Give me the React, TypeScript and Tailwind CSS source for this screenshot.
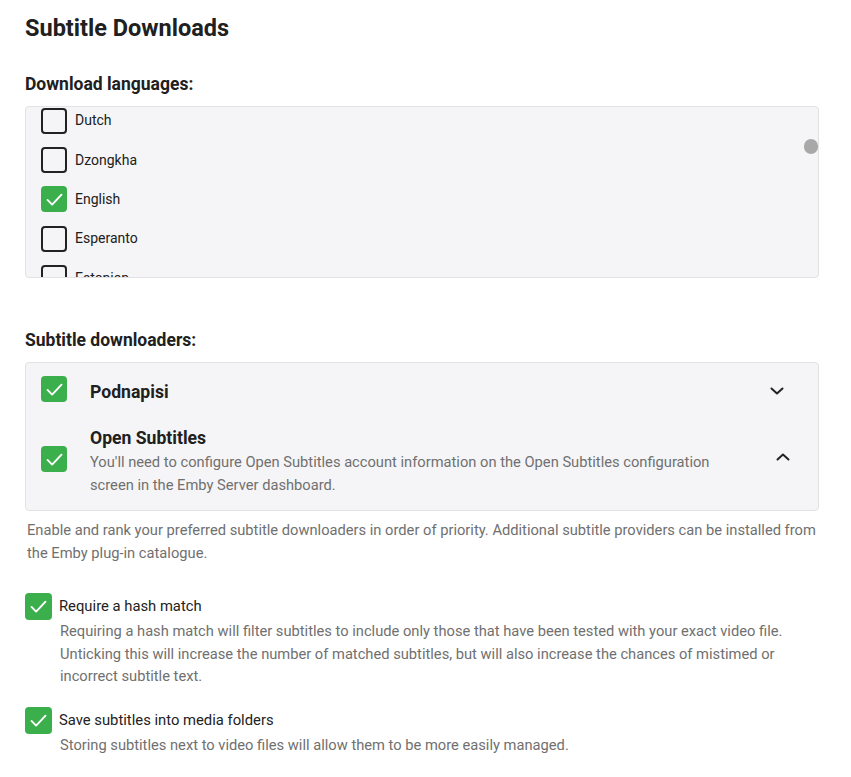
import { ReactNode } from "react";

const languages = [
  { name: "Dutch", checked: false },
  { name: "Dzongkha", checked: false },
  { name: "English", checked: true },
  { name: "Esperanto", checked: false },
  { name: "Estonian", checked: false },
];

function CheckBox({ checked, size = "w-[26px] h-[26px]" }: { checked: boolean; size?: string }) {
  if (checked) {
    return (
      <span className={`${size} shrink-0 rounded-[4px] bg-[#3aaf4c] flex items-center justify-center`}>
        <svg width="21" height="21" viewBox="0 0 24 24" fill="none" stroke="white" strokeWidth="2.2" strokeLinecap="round" strokeLinejoin="round">
          <polyline points="4,12.5 9.3,17.8 20,6.5" />
        </svg>
      </span>
    );
  }
  return <span className={`${size} shrink-0 rounded-[4px] border-2 border-[#222]`} />;
}

function Chevron({ up }: { up?: boolean }) {
  return (
    <svg width="14" height="8" viewBox="0 0 14 8" fill="none" stroke="#222" strokeWidth="2" strokeLinecap="round" strokeLinejoin="round">
      {up ? <polyline points="1.5,6.5 7,1.5 12.5,6.5" /> : <polyline points="1.5,1.5 7,6.5 12.5,1.5" />}
    </svg>
  );
}

function Option({ label, children, mt }: { label: string; children: ReactNode; mt: string }) {
  return (
    <div className={`flex gap-[7px] ${mt}`}>
      <CheckBox checked size="w-[27px] h-[27px]" />
      <div className="pt-[3px]">
        <div className="text-[14.8px] leading-[20px] text-[#222]">{label}</div>
        <div className="text-[14.7px] leading-[22.5px] text-[#707070] mt-[4px] pl-[1px]">{children}</div>
      </div>
    </div>
  );
}

export default function App() {
  return (
    <div className="w-[851px] h-[777px] bg-white pl-[25px] pr-[32px] pt-[13px] font-['Roboto',sans-serif] text-[#202020] overflow-hidden">
      <h1 className="text-[23.5px] font-bold leading-[30px]">Subtitle Downloads</h1>

      <h2 className="text-[17.5px] font-bold leading-[24px] mt-[29px]">Download languages:</h2>
      <div className="relative mt-[10px] h-[172px] rounded-[4px] border border-[#e2e2e5] bg-[#f5f5f7] overflow-hidden">
        <div className="mt-[-6px]">
          {languages.map((l) => (
            <div key={l.name} className="h-[39.4px] flex items-center gap-[8px] pl-[15px]">
              <CheckBox checked={l.checked} />
              <span className="text-[14px]">{l.name}</span>
            </div>
          ))}
        </div>
        <span className="absolute right-0 top-[32px] w-[14px] h-[15px] rounded-full bg-[#a8a8a8]" />
      </div>

      <h2 className="text-[17.5px] font-bold leading-[24px] mt-[50px]">Subtitle downloaders:</h2>
      <div className="mt-[10px] rounded-[4px] border border-[#e2e2e5] bg-[#f5f5f7] pl-[15px] pr-[28px] pt-[13px] pb-[13px]">
        <div className="flex items-center h-[26px]">
          <CheckBox checked />
          <span className="ml-[23px] text-[17.6px] font-bold flex-1 pt-[6px]">Podnapisi</span>
          <span className="mr-[6px] mt-[3px]"><Chevron /></span>
        </div>
        <div className="flex items-start mt-[25px]">
          <span className="mt-[19px]"><CheckBox checked /></span>
          <div className="ml-[23px] flex-1">
            <div className="text-[17.6px] font-bold leading-[22px]">Open Subtitles</div>
            <div className="text-[14.7px] leading-[23px] text-[#707070] mt-[2px] pr-[40px]">
              You'll need to configure Open Subtitles account information on the Open Subtitles configuration screen in the Emby Server dashboard.
            </div>
          </div>
          <span className="mt-[26px]"><Chevron up /></span>
        </div>
      </div>
      <p className="text-[14.7px] leading-[23px] text-[#707070] mt-[8px] pl-[2px]">
        Enable and rank your preferred subtitle downloaders in order of priority. Additional subtitle providers can be installed from the Emby plug-in catalogue.
      </p>

      <Option label="Require a hash match" mt="mt-[28px]">
        Requiring a hash match will filter subtitles to include only those that have been tested with your exact video file. Unticking this will increase the number of matched subtitles, but will also increase the chances of mistimed or incorrect subtitle text.
      </Option>
      <Option label="Save subtitles into media folders" mt="mt-[19px]">
        Storing subtitles next to video files will allow them to be more easily managed.
      </Option>
    </div>
  );
}
